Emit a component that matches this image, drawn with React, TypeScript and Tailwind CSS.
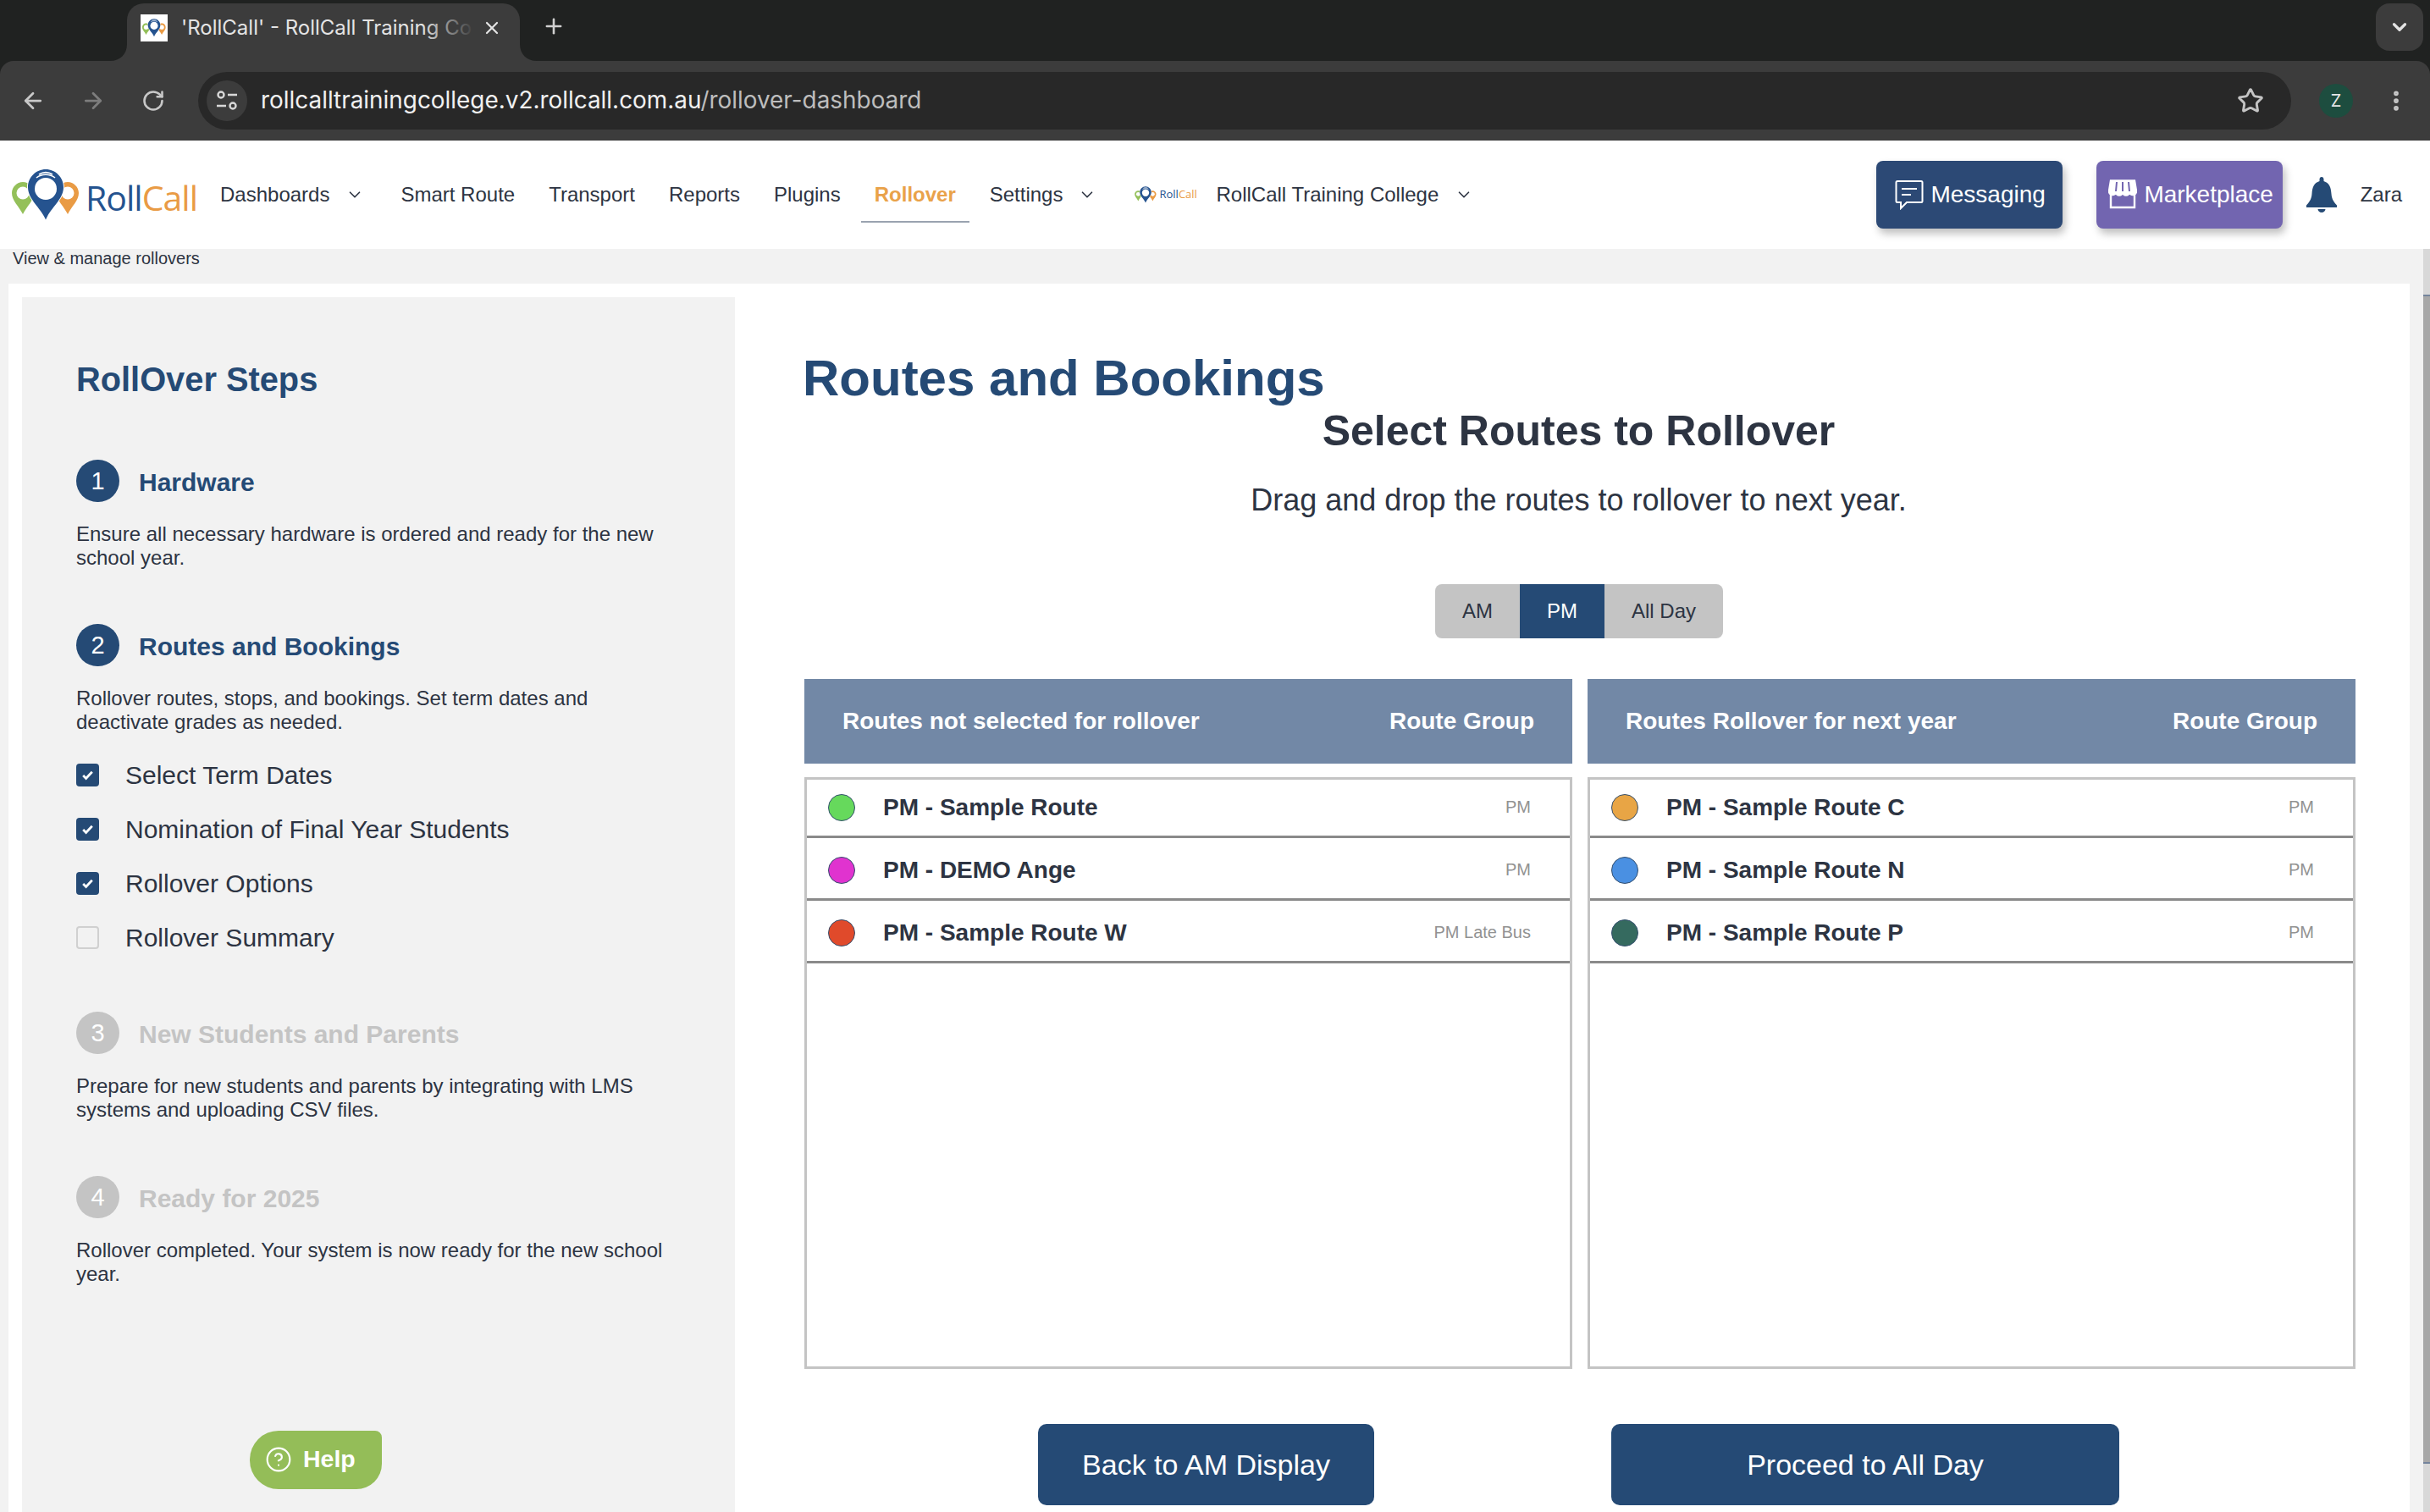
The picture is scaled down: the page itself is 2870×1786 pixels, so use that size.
import { ArrowLeft, ArrowRight, ChevronDown, CircleHelp, EllipsisVertical, Plus, RotateCw, Star, X } from "lucide-react";

function Pins({ className }: { className?: string }) {
  return (
    <svg viewBox="0 0 80 62" className={className}>
      <path d="M13 16C6 16 0 22 0 29c0 9 8 15 13 25 5-10 13-16 13-25 0-7-6-13-13-13z" fill="#94c05a" />
      <circle cx="13" cy="29" r="7.5" fill="#fff" />
      <path d="M66 16c-7 0-13 6-13 13 0 9 8 15 13 25 5-10 13-16 13-25 0-7-6-13-13-13z" fill="#e99b45" />
      <circle cx="66" cy="29" r="7.5" fill="#fff" />
      <path d="M40 0C28 0 18 10 18 22c0 15 15 24 22 40 7-16 22-25 22-40C62 10 52 0 40 0z" fill="#fff" />
      <path d="M40 1C28.500 1 19 10.500 19 22c0 14.500 14.500 23.500 21 38.500C46.500 45.500 61 36.500 61 22 61 10.500 51.500 1 40 1z" fill="#25538f" />
      <circle cx="40" cy="24" r="13" fill="#fff" />
      <path d="M29 11c6-5 16-5 22 0M32 7c5-3 11-3 16 0" stroke="#fff" strokeWidth="1.600" fill="none" />
    </svg>
  );
}

function Step({ n, title, active, children }: { n: number; title: string; active: boolean; children: React.ReactNode }) {
  return (
    <div>
      <div className="flex items-center h-[50px]">
        <div className={`w-[51px] h-[50px] pt-[2px] rounded-full flex items-center justify-center text-[29px] text-white ${active ? "bg-[#254a75]" : "bg-[#c4c4c4]"}`}>{n}</div>
        <div className={`ml-[23px] pt-[2px] text-[30px] font-bold ${active ? "text-[#254a75]" : "text-[#c4c4c4]"}`}>{title}</div>
      </div>
      <p className="mt-[24px] w-[712px] text-[24px] leading-[28px] text-[#2d3442]">{children}</p>
    </div>
  );
}

function Check({ label, done }: { label: string; done: boolean }) {
  return (
    <div className="flex items-center h-[64px] text-[30px] text-[#2d3442]">
      <div className={`w-[27px] h-[27px] rounded-[4px] flex items-center justify-center ${done ? "bg-[#254a75]" : "border-2 border-[#d0d0d0]"}`}>
        {done && (
          <svg viewBox="0 0 16 16" className="w-[17px] h-[17px]">
            <path d="M3 8.500l3.200 3.200L13 4.500" fill="none" stroke="#fff" strokeWidth="2.600" />
          </svg>
        )}
      </div>
      <span className="ml-[31px]">{label}</span>
    </div>
  );
}

type Route = { name: string; group: string; color: string };

function RouteTable({ title, routes }: { title: string; routes: Route[] }) {
  return (
    <div>
      <div className="h-[100px] bg-[#7288a6] px-[45px] flex items-center justify-between text-white font-bold text-[28px]">
        <span>{title}</span>
        <span>Route Group</span>
      </div>
      <div className="mt-[16px] h-[699px] border-[3px] border-[#c4c4c4]">
        {routes.map((r) => (
          <div key={r.name} className="h-[74px] pt-[4px] first:h-[69px] first:pt-0 border-b-[3px] border-[#8a8a8a] flex items-center pl-[25px] pr-[46px]">
            <span className="w-[32px] h-[32px] rounded-full border border-[#35506f]" style={{ background: r.color }} />
            <span className="ml-[33px] text-[28px] font-bold text-[#2d3442]">{r.name}</span>
            <span className="ml-auto mb-[2px] text-[20px] text-[#929292]">{r.group}</span>
          </div>
        ))}
      </div>
    </div>
  );
}

const leftRoutes: Route[] = [
  { name: "PM - Sample Route", group: "PM", color: "#66d95c" },
  { name: "PM - DEMO Ange", group: "PM", color: "#e033cf" },
  { name: "PM - Sample Route W", group: "PM Late Bus", color: "#e04a2b" },
];

const rightRoutes: Route[] = [
  { name: "PM - Sample Route C", group: "PM", color: "#e8a545" },
  { name: "PM - Sample Route N", group: "PM", color: "#4a90e2" },
  { name: "PM - Sample Route P", group: "PM", color: "#356a5f" },
];

function BrowserChrome() {
  return (
    <div className="shrink-0 bg-[#202221] font-['Inter',sans-serif]">
      <div className="h-[72px] flex items-end relative">
        <div className="ml-[150px] w-[464px] h-[68px] bg-[#3c3c3c] rounded-t-[20px] relative flex items-center pl-[16px] pb-[10px]">
          <svg viewBox="0 0 20 20" className="absolute left-[-20px] bottom-0 w-[20px] h-[20px]">
            <path d="M20 0v20H0c12 0 20-8 20-20z" fill="#3c3c3c" />
          </svg>
          <svg viewBox="0 0 20 20" className="absolute right-[-20px] bottom-0 w-[20px] h-[20px]">
            <path d="M0 0v20h20C8 20 0 12 0 0z" fill="#3c3c3c" />
          </svg>
          <div className="w-[32px] h-[32px] bg-white flex items-center justify-center shrink-0">
            <Pins className="w-[28px]" />
          </div>
          <div className="ml-[16px] w-[346px] whitespace-nowrap text-[24px] text-[#e4e4e4] relative">
            'RollCall' - RollCall Training Co
            <div className="absolute right-0 top-0 bottom-0 w-[62px] bg-gradient-to-r from-transparent to-[#3c3c3c]" />
          </div>
          <X className="ml-[9px] w-[24px] h-[24px] text-[#e4e4e4]" strokeWidth={2.200} />
        </div>
        <Plus className="ml-[26px] mb-[27px] w-[28px] h-[28px] text-[#d0d0d0]" strokeWidth={2.200} />
        <div className="absolute right-[8px] top-[4px] w-[56px] h-[56px] rounded-[16px] bg-[#3c3c3c] flex items-center justify-center">
          <ChevronDown className="w-[26px] h-[26px] text-[#e4e4e4]" strokeWidth={3} />
        </div>
      </div>
      <div className="h-[94px] bg-[#3c3c3c] rounded-t-[16px] flex items-center">
        <ArrowLeft className="ml-[24px] w-[30px] h-[30px] text-[#c8c8c8]" strokeWidth={2.200} />
        <ArrowRight className="ml-[41px] w-[30px] h-[30px] text-[#7d7d7d]" strokeWidth={2.200} />
        <RotateCw className="ml-[42px] w-[28px] h-[28px] text-[#c8c8c8]" strokeWidth={2.200} />
        <div className="ml-[39px] w-[2472px] h-[68px] rounded-full bg-[#282828] flex items-center pl-[10px] pr-[32px]">
          <div className="w-[48px] h-[48px] rounded-full bg-[#3c3c3c] flex items-center justify-center">
            <svg viewBox="0 0 28 28" className="w-[28px] h-[28px]" fill="none" stroke="#d8d8d8" strokeWidth="2.400">
              <circle cx="7" cy="7" r="3.500" />
              <path d="M15 7h11M2 20h11" />
              <circle cx="21" cy="20" r="3.500" />
            </svg>
          </div>
          <span className="ml-[16px] text-[27.900px] text-[#f0f0f0]">
            rollcalltrainingcollege.v2.rollcall.com.au<span className="text-[#bdbdbd]">/rollover-dashboard</span>
          </span>
          <Star className="ml-auto w-[32px] h-[32px] text-[#c4c4c4]" strokeWidth={2.200} />
        </div>
        <div className="ml-[33px] w-[40px] h-[40px] rounded-full bg-[#1d4d3f] flex items-center justify-center text-[20px] text-[#e8e8e8]">Z</div>
        <EllipsisVertical className="ml-[36px] w-[30px] h-[30px] text-[#c8c8c8]" strokeWidth={2.600} />
      </div>
    </div>
  );
}

function NavBar() {
  return (
    <div className="shrink-0 h-[128px] bg-white flex items-center text-[24px] text-[#2d3442] relative">
      <div className="ml-[14px] flex items-center w-[246px]">
        <Pins className="w-[80px] h-[62px]" />
        <span className="ml-[7px] font-['Open_Sans',sans-serif] text-[41px] leading-none mt-[6px] tracking-[-1px] text-[#25538f]">
          Roll<span className="text-[#e99b45]">Call</span>
        </span>
      </div>
      <span>Dashboards</span>
      <ChevronDown className="ml-[19px] w-[22px] h-[22px]" strokeWidth={1.800} />
      <span className="ml-[43px]">Smart Route</span>
      <span className="ml-[40px]">Transport</span>
      <span className="ml-[40px]">Reports</span>
      <span className="ml-[40px]">Plugins</span>
      <div className="ml-[24px] h-[128px] relative flex items-center px-[16px] font-bold text-[#e9a24a]">
        Rollover
        <div className="absolute left-0 right-0 top-[95px] h-[2px] bg-[#9aa3b0]" />
      </div>
      <span className="ml-[24px]">Settings</span>
      <ChevronDown className="ml-[18px] w-[22px] h-[22px]" strokeWidth={1.800} />
      <div className="ml-[45px] w-[80px] flex items-center">
        <Pins className="w-[26px] h-[20px]" />
        <span className="ml-[3px] font-['Open_Sans',sans-serif] text-[13px] text-[#25538f]">
          Roll<span className="text-[#e99b45]">Call</span>
        </span>
      </div>
      <span className="ml-[16px]">RollCall Training College</span>
      <ChevronDown className="ml-[19px] w-[22px] h-[22px]" strokeWidth={1.800} />
      <div className="ml-auto w-[220px] h-[80px] rounded-[8px] bg-[#2c4975] pl-[3px] shadow-[3px_6px_10px_rgba(0,0,0,0.25)] flex items-center justify-center text-white text-[28px]">
        <svg viewBox="0 0 34 36" className="w-[34px] h-[36px] mr-[8px]" fill="none" stroke="#fff" strokeWidth="2">
          <path d="M3 2h28a1.500 1.500 0 0 1 1.500 1.500v22a1.500 1.500 0 0 1-1.500 1.500H14l-7 7v-7H3a1.500 1.500 0 0 1-1.500-1.500v-22A1.500 1.500 0 0 1 3 2z" />
          <path d="M8 11h18M8 18h11" />
        </svg>
        Messaging
      </div>
      <div className="ml-[40px] w-[220px] h-[80px] rounded-[8px] bg-[#7265b0] pl-[4px] shadow-[3px_6px_10px_rgba(0,0,0,0.25)] flex items-center justify-center text-white text-[28px]">
        <svg viewBox="0 0 34 36" className="w-[34px] h-[36px] mr-[8px]" fill="none" stroke="#fff" strokeWidth="2.400">
          <path d="M3 17v16h28V17" />
          <path d="M3 1.500h28l2 12a4 4 0 0 1-8 1 4 4 0 0 1-8 0 4 4 0 0 1-8 0 4 4 0 0 1-8-1z" fill="#fff" />
          <path d="M10 3l-1 11M17 3v11M24 3l1 11" stroke="#7265b0" strokeWidth="2" />
        </svg>
        Marketplace
      </div>
      <svg viewBox="0 0 36 42" className="ml-[28px] w-[36px] h-[42px]">
        <path d="M18 0c-1.500 0-2.500 1-2.500 3v2C9 7 7 12 6.500 20 6 27 3 30 0 33.500V36h36v-2.500C33 30 30 27 29.500 20 29 12 27 7 20.500 5V3C20.500 1 19.500 0 18 0z" fill="#254a75" />
        <path d="M13.500 38h9c0 2-2 4-4.500 4s-4.500-2-4.500-4z" fill="#254a75" />
      </svg>
      <span className="ml-[28px] mr-[33px]">Zara</span>
    </div>
  );
}

function Sidebar() {
  return (
    <div className="w-[842px] shrink-0 mt-[16px] bg-[#f2f2f2] pl-[64px] pt-[73px] h-[1500px]">
      <h2 className="text-[39.800px] leading-[48px] font-bold text-[#254a75]">RollOver Steps</h2>
      <div className="mt-[71px]">
        <Step n={1} title="Hardware" active>
          Ensure all necessary hardware is ordered and ready for the new school year.
        </Step>
      </div>
      <div className="mt-[64px]">
        <Step n={2} title="Routes and Bookings" active>
          Rollover routes, stops, and bookings. Set term dates and deactivate grades as needed.
        </Step>
      </div>
      <div className="mt-[16px]">
        <Check label="Select Term Dates" done />
        <Check label="Nomination of Final Year Students" done />
        <Check label="Rollover Options" done />
        <Check label="Rollover Summary" done={false} />
      </div>
      <div className="mt-[56px]">
        <Step n={3} title="New Students and Parents" active={false}>
          Prepare for new students and parents by integrating with LMS systems and uploading CSV files.
        </Step>
      </div>
      <div className="mt-[64px]">
        <Step n={4} title="Ready for 2025" active={false}>
          Rollover completed. Your system is now ready for the new school year.
        </Step>
      </div>
      <div className="mt-[171px] ml-[205px] w-[156px] h-[69px] bg-[#94bd58] rounded-l-[34px] rounded-tr-[8px] rounded-br-[30px] flex items-center pl-[18px] pb-[2px] text-white font-bold text-[28.500px]">
        <CircleHelp className="w-[32px] h-[32px]" strokeWidth={1.600} />
        <span className="ml-[13px]">Help</span>
      </div>
    </div>
  );
}

function Main() {
  return (
    <div className="flex-1 pl-[82px] pr-[64px] pt-[80px]">
      <h1 className="-ml-[2px] text-[60px] leading-[64px] font-bold text-[#254a75]">Routes and Bookings</h1>
      <div className="pr-[3px] text-center text-[50px] leading-[60px] font-bold text-[#2d3442]">Select Routes to Rollover</div>
      <div className="mt-[30px] pr-[3px] text-center text-[36px] leading-[44px] text-[#2d3442]">Drag and drop the routes to rollover to next year.</div>
      <div className="mt-[77px] ml-[745px] flex w-[340px] h-[64px] text-[24px] text-[#2d3442]">
        <div className="w-[100px] bg-[#c4c4c4] rounded-l-[8px] flex items-center justify-center">AM</div>
        <div className="w-[100px] bg-[#254a75] text-white flex items-center justify-center">PM</div>
        <div className="w-[140px] bg-[#c4c4c4] rounded-r-[8px] flex items-center justify-center">All Day</div>
      </div>
      <div className="mt-[48px] grid grid-cols-2 gap-[18px]">
        <RouteTable title="Routes not selected for rollover" routes={leftRoutes} />
        <RouteTable title="Routes Rollover for next year" routes={rightRoutes} />
      </div>
      <div className="mt-[65px] ml-[276px] flex gap-[280px] text-white text-[34px]">
        <div className="w-[397px] h-[96px] rounded-[10px] bg-[#254a75] flex items-center justify-center">Back to AM Display</div>
        <div className="w-[600px] h-[96px] rounded-[10px] bg-[#254a75] flex items-center justify-center">Proceed to All Day</div>
      </div>
    </div>
  );
}

export default function App() {
  return (
    <div className="w-[2870px] h-[1786px] overflow-hidden flex flex-col bg-[#f2f2f2] font-['Liberation_Sans',Arial,sans-serif]">
      <BrowserChrome />
      <NavBar />
      <div className="flex-1 flex min-h-0">
        <div className="flex-1 min-w-0">
          <div className="h-[41px] pl-[15px] text-[20px] leading-[22px] text-[#2d3442]">View &amp; manage rollovers</div>
          <div className="ml-[10px] mr-[16px] h-[1500px] bg-white flex">
            <div className="pl-[16px] shrink-0">
              <Sidebar />
            </div>
            <Main />
          </div>
        </div>
        <div className="w-[8px] shrink-0 bg-[#d8d8d8] flex flex-col">
          <div className="mt-[54px] h-[1381px] bg-[#a8a8a8] border-y-2 border-[#74849c]" />
        </div>
      </div>
    </div>
  );
}
